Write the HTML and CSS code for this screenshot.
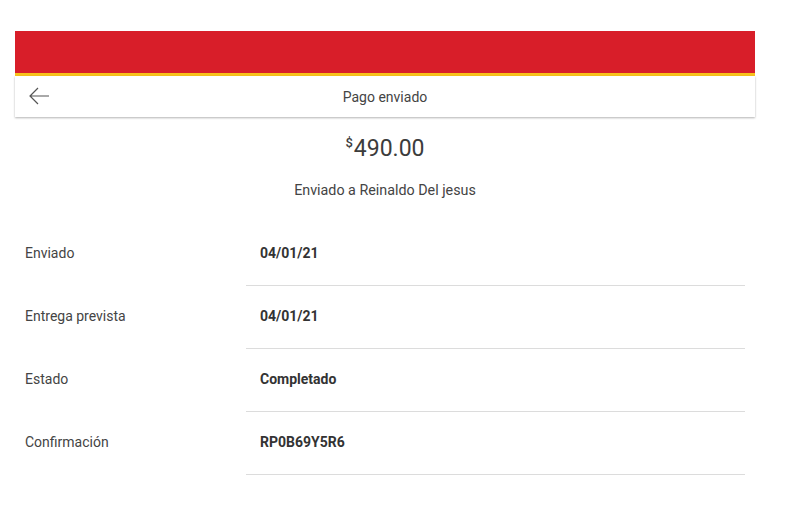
FILE: index.html
```html
<!DOCTYPE html>
<html lang="es">
<head>
    <meta charset="UTF-8">
    <meta name="viewport" content="width=device-width, initial-scale=1.0">
    <title>Pago enviado</title>
    <link rel="stylesheet" href="styles.css">
</head>
<body>
    <div class="container">
        <div class="brand-bar"></div>
        <div class="nav">
            <button class="back" aria-label="Volver">
                <svg width="22" height="18" viewBox="0 0 22 18">
                    <path d="M21 9H2M10 1L2 9l8 8" fill="none" stroke="#555" stroke-width="1.2"/>
                </svg>
            </button>
            <span class="nav-title">Pago enviado</span>
        </div>

        <div class="amount"><sup>$</sup>490.00</div>
        <div class="recipient">Enviado a Reinaldo Del jesus</div>

        <div class="details">
            <div class="row">
                <div class="label">Enviado</div>
                <div class="value">04/01/21</div>
            </div>
            <div class="row">
                <div class="label">Entrega prevista</div>
                <div class="value">04/01/21</div>
            </div>
            <div class="row">
                <div class="label">Estado</div>
                <div class="value">Completado</div>
            </div>
            <div class="row">
                <div class="label">Confirmación</div>
                <div class="value">RP0B69Y5R6</div>
            </div>
        </div>
    </div>
</body>
</html>
```

FILE: styles.css
```css
body {
    margin: 0;
    padding-top: 31px;
    font-family: 'Roboto', 'Liberation Sans', sans-serif;
    font-size: 14px;
    color: #444;
    background-color: #fff;
}
.container {
    width: 740px;
    margin-left: 15px;
}
.brand-bar {
    height: 42px;
    background-color: #d81e29;
    border-bottom: 3px solid #f7c21b;
}
.nav {
    position: relative;
    height: 41px;
    display: flex;
    align-items: center;
    justify-content: center;
    background-color: #fff;
    box-shadow: 0 1px 2px rgba(0,0,0,0.3);
}
.back {
    position: absolute;
    left: 13px;
    top: 11px;
    padding: 0;
    border: none;
    background: none;
    cursor: pointer;
}
.back svg {
    display: block;
}
.nav-title {
    color: #444;
}
.amount {
    margin-top: 17px;
    height: 30px;
    line-height: 30px;
    text-align: center;
    font-size: 23px;
    color: #3c3c3c;
}
.amount sup {
    font-size: 13px;
    font-weight: 500;
    vertical-align: top;
    position: relative;
    top: -6px;
    margin-right: 1px;
}
.recipient {
    margin-top: 16px;
    height: 20px;
    line-height: 20px;
    text-align: center;
    font-size: 14.3px;
}
.details {
    margin-top: 23px;
}
.row {
    display: flex;
    height: 63px;
}
.label {
    width: 221px;
    padding-left: 10px;
    line-height: 61px;
}
.value {
    width: 485px;
    height: 62px;
    padding-left: 14px;
    line-height: 60px;
    font-weight: bold;
    color: #333;
    border-bottom: 1px solid #dcdcdc;
}
```
